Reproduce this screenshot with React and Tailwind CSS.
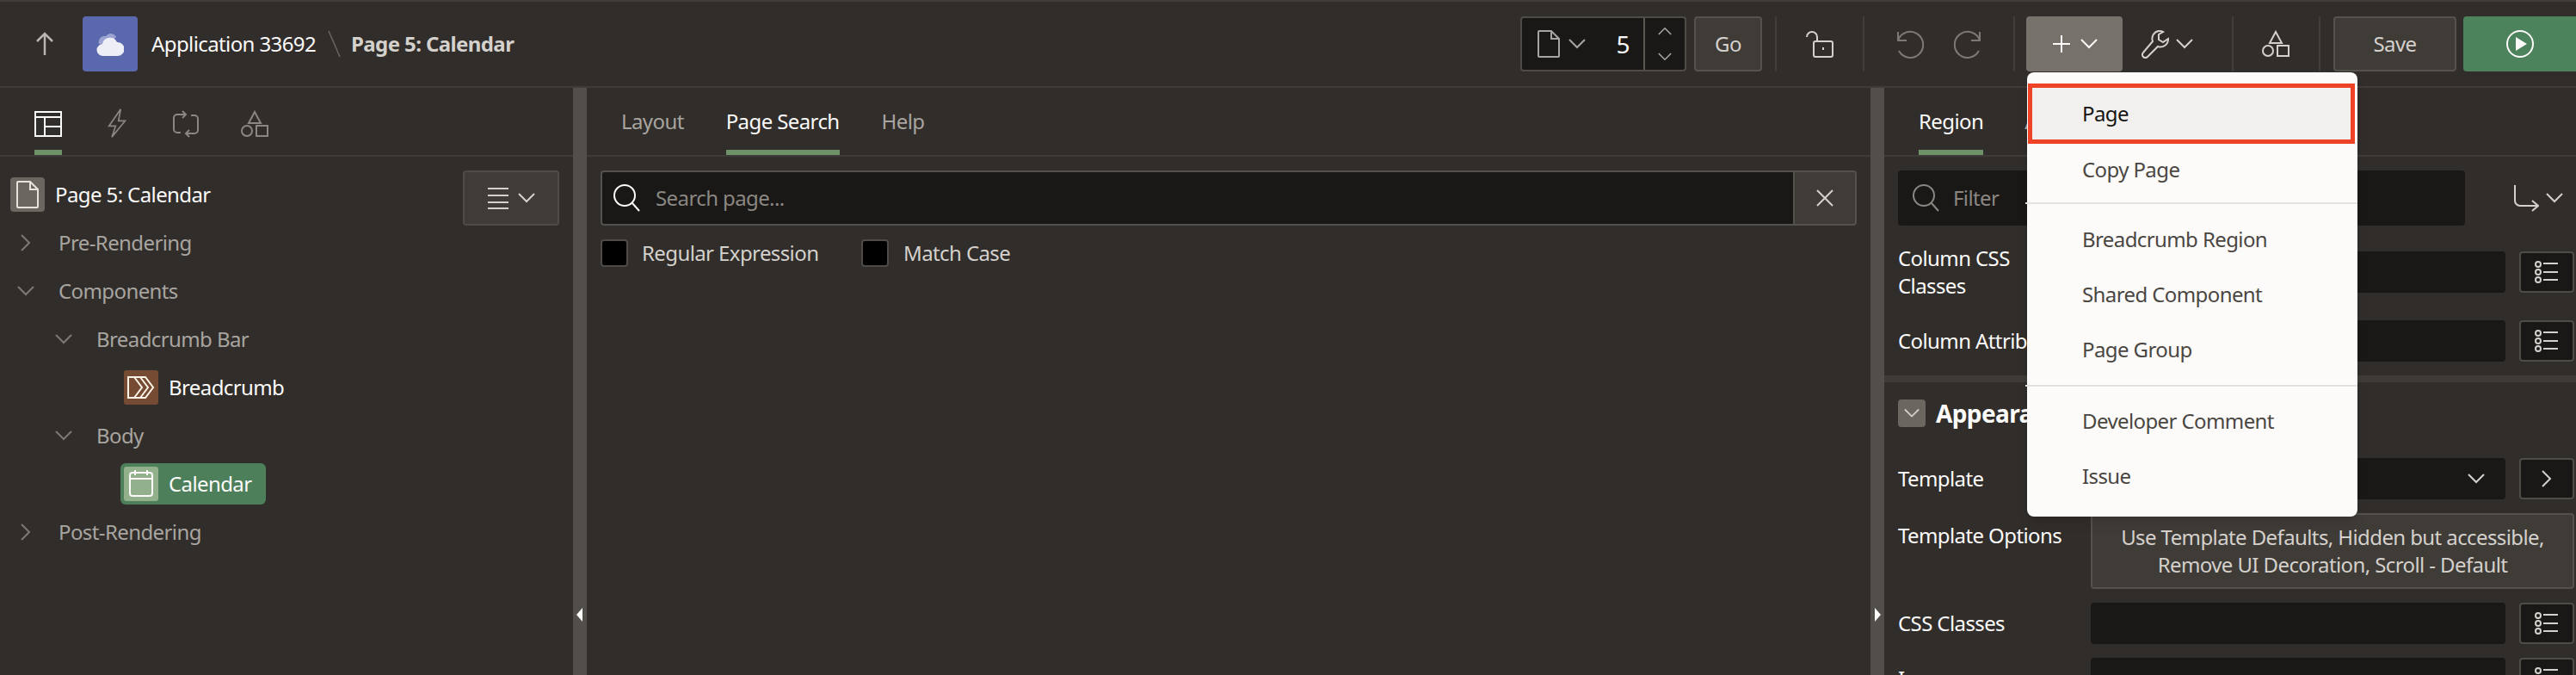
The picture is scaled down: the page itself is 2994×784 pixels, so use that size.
const Svg = ({ w = 32, h = 32, vb = '0 0 32 32', className = '', sw = 2, children }) => (
  <svg width={w} height={h} viewBox={vb} fill="none" stroke="currentColor" strokeWidth={sw} className={`shrink-0 ${className}`}>
    {children}
  </svg>
);

const ChevronDown = ({ className = '', w = 20 }) => (
  <Svg w={w} h={12} vb="0 0 20 12" className={className}><path d="M1 1l9 9 9-9" /></Svg>
);
const ChevronRight = ({ className = '' }) => (
  <Svg w={12} h={20} vb="0 0 12 20" className={className}><path d="M1 1l9 9-9 9" /></Svg>
);
const PageGlyph = ({ className = '' }) => (
  <Svg w={26} h={32} vb="0 0 26 32" className={className}><path d="M2 1h14l9 9v20a1 1 0 0 1-1 1H2a1 1 0 0 1-1-1V2a1 1 0 0 1 1-1zM16 1v9h9" /></Svg>
);
const Shapes = ({ className = '' }) => (
  <Svg className={className}><path d="M16 2l7 13H9z" /><circle cx="7" cy="24" r="6" /><rect x="18" y="18" width="13" height="12" /></Svg>
);
const SearchGlyph = ({ className = '' }) => (
  <Svg className={className}><circle cx="14" cy="13" r="12" /><path d="M23 22l8 9" /></Svg>
);
const ListGlyph = () => (
  <Svg w={28} h={28} vb="0 0 28 28" className="text-[#d4d1cc]">
    <circle cx="4" cy="5" r="3" /><circle cx="4" cy="14" r="3" /><circle cx="4" cy="23" r="3" />
    <path d="M10 4h17M10 14h17M10 23h17" />
  </Svg>
);

const SideButton = ({ children }) => (
  <div className="flex h-[48px] w-[64px] shrink-0 items-center justify-center rounded-[4px] border-2 border-[#4f4b46] bg-[#1a1816]">{children}</div>
);
const Divider = () => <div className="h-[64px] w-[2px] shrink-0 bg-[#413d39]" />;

function Header() {
  return (
    <header className="flex h-[100px] shrink-0 items-center border-b-2 border-[#3f3b37]">
      <Svg w={20} h={28} vb="0 0 20 28" className="ml-[42px] text-[#b8b5b0]" sw={2.5}><path d="M10 27V2M1 11l9-9 9 9" /></Svg>
      <div className="ml-[34px] flex h-[64px] w-[64px] items-center justify-center rounded-[4px] bg-[#5a68ad]">
        <svg width="32" height="30" viewBox="0 0 32 30">
          <path d="M3 15a7 7 0 0 1 8-9 7 7 0 0 1 12 1l-8 8z" fill="#9aa3d1" />
          <path d="M8 29a7 7 0 0 1-1-14 9 9 0 0 1 17-2 8 8 0 0 1 1 16z" fill="#eeeef6" />
        </svg>
      </div>
      <span className="ml-[16px] w-[194px] whitespace-nowrap text-[#fcfbfa]">Application 33692</span>
      <Svg w={16} h={32} vb="0 0 16 32" className="ml-[11px] text-[#6b6660]" sw={1.5}><path d="M1 1l13 30" /></Svg>
      <span className="ml-[11px] whitespace-nowrap font-bold text-[#d4d1cc]">Page 5: Calendar</span>

      <div className="ml-auto flex items-center">
        <div className="flex h-[64px] w-[193px] items-stretch rounded-[4px] border-2 border-[#4f4b46] bg-[#1a1816]">
          <div className="flex flex-1 items-center border-r-2 border-[#5b5752] pl-[18px] pr-[16px] text-[#a8a5a0]">
            <PageGlyph />
            <ChevronDown className="ml-[10px]" />
            <span className="ml-auto text-[28px] text-[#fcfbfa]">5</span>
          </div>
          <div className="flex w-[46px] flex-col items-center justify-center gap-[18px] text-[#a8a5a0]">
            <ChevronDown w={16} className="rotate-180" />
            <ChevronDown w={16} />
          </div>
        </div>
        <div className="ml-[9px] flex h-[64px] w-[79px] items-center justify-center rounded-[4px] border-2 border-[#55514c] bg-[#3f3b37] text-[#d4d1cc]">Go</div>
        <div className="ml-[15px]"><Divider /></div>
        <Svg w={34} h={34} vb="0 0 34 34" className="ml-[33px] text-[#d4d1cc]">
          <path d="M2 9a6 6 0 0 1 12 0v5" /><rect x="10" y="14" width="22" height="18" rx="2" /><path d="M21 21v3" />
        </Svg>
        <div className="ml-[33px]"><Divider /></div>
        <Svg w={34} h={34} vb="0 0 34 34" className="ml-[35px] text-[#7d7974]">
          <path d="M4 3v10h10" /><path d="M4 13A15 15 0 1 1 5 25" />
        </Svg>
        <Svg w={34} h={34} vb="0 0 34 34" className="ml-[35px] text-[#7d7974]">
          <path d="M30 3v10H20" /><path d="M30 13A15 15 0 1 0 29 25" />
        </Svg>
        <div className="ml-[35px]"><Divider /></div>
        <div className="ml-[13px] flex h-[64px] w-[112px] items-center justify-center gap-[10px] rounded-[4px] bg-[#77716b] text-[#fcfbfa]">
          <Svg w={24} h={24} vb="0 0 24 24"><path d="M12 2v20M2 12h20" /></Svg>
          <ChevronDown />
        </div>
        <div className="ml-[22px] flex w-[60px] items-center gap-[8px] text-[#d4d1cc]">
          <Svg w={32} h={34} vb="0 0 32 34">
            <path d="M20 2a9 9 0 0 0-7 12L2 27a3.5 3.5 0 0 0 5 5l12-12a9 9 0 0 0 12-9l-6 4-5-3V6l5-3a9 9 0 0 0-5-1z" />
          </Svg>
          <ChevronDown />
        </div>
        <div className="ml-[45px]"><Divider /></div>
        <Shapes className="ml-[33px] text-[#d4d1cc]" />
        <div className="ml-[34px]"><Divider /></div>
        <div className="ml-[15px] flex h-[64px] w-[143px] items-center justify-center rounded-[4px] border-2 border-[#55514c] bg-[#3f3b37] text-[#d4d1cc]">Save</div>
        <div className="ml-[8px] flex h-[64px] w-[131px] items-center justify-center rounded-l-[4px] bg-[#4c825c] text-[#fcfbfa]">
          <svg width="32" height="32" viewBox="0 0 32 32" fill="none" stroke="currentColor" strokeWidth="2">
            <circle cx="16" cy="16" r="15" /><path d="M11 8l13 8-13 8z" fill="currentColor" stroke="none" />
          </svg>
        </div>
      </div>
    </header>
  );
}

const TreeLabel = ({ indent, open, label }) => (
  <div className="flex h-[56px] items-center text-[#a8a5a0]" style={{ paddingLeft: indent }}>
    <span className="flex w-[44px] shrink-0 justify-center pr-[32px] text-[#7d7974]">
      {open ? <ChevronDown /> : <ChevronRight />}
    </span>
    {label}
  </div>
);

function LeftPanel() {
  return (
    <aside className="w-[666px] shrink-0">
      <div className="flex h-[80px] items-start border-b-2 border-[#3f3b37] pl-[40px]">
        <div className="flex h-[78px] w-[32px] flex-col items-center justify-between pt-[26px]">
          <Svg className="text-[#fcfbfa]"><path d="M1 2h30v28H1zM1 8h30M12 8v22M12 19h19" /></Svg>
          <div className="h-[6px] w-[32px] bg-[#6e9168]" />
        </div>
        <Svg className="ml-[48px] mt-[24px] text-[#8a8783]" h={34} vb="0 0 32 40"><path d="M21 1L5 24h9l-5 15 18-22h-9z" /></Svg>
        <Svg className="ml-[48px] mt-[26px] text-[#8a8783]"><path d="M16 5H6a4 4 0 0 0-4 4v13a4 4 0 0 0 4 4h4M16 27h10a4 4 0 0 0 4-4V10a4 4 0 0 0-4-4h-4M12 1l4 4-4 4M20 23l-4 4 4 4" /></Svg>
        <Shapes className="ml-[48px] mt-[26px] text-[#8a8783]" />
      </div>
      <div className="pt-[16px]">
        <div className="flex items-start pl-[12px] pr-[16px]">
          <div className="flex h-[56px] items-center text-[#fcfbfa]">
            <div className="flex h-[40px] w-[40px] items-center justify-center rounded-[4px] bg-[#6b6660] text-[#e6e3df]"><PageGlyph /></div>
            <span className="ml-[12px]">Page 5: Calendar</span>
          </div>
          <div className="-mb-[8px] ml-auto flex h-[64px] w-[112px] items-center justify-center gap-[10px] rounded-[4px] border-2 border-[#4f4b46] bg-[#3f3b37] text-[#d4d1cc]">
            <Svg w={26} h={26} vb="0 0 26 26"><path d="M1 2h24M1 10h24M1 18h24M1 25h24" /></Svg>
            <ChevronDown />
          </div>
        </div>
        <TreeLabel indent={24} label="Pre-Rendering" />
        <TreeLabel indent={24} open label="Components" />
        <TreeLabel indent={68} open label="Breadcrumb Bar" />
        <div className="flex h-[56px] items-center pl-[144px] text-[#fcfbfa]">
          <div className="flex h-[40px] w-[40px] items-center justify-center rounded-[3px] bg-[#754c33]">
            <Svg w={32} h={26} vb="0 0 32 26" className="text-[#fcf3e8]"><path d="M1 1h20l9 12-9 12H1zM8 1l9 12-9 12M15 1l9 12-9 12" /></Svg>
          </div>
          <span className="ml-[12px]">Breadcrumb</span>
        </div>
        <TreeLabel indent={68} open label="Body" />
        <div className="flex h-[56px] items-center pl-[140px] text-[#fcfbfa]">
          <div className="flex h-[48px] w-[169px] items-center rounded-[6px] bg-[#4d7f5a] pl-[4px]">
            <div className="flex h-[40px] w-[40px] items-center justify-center rounded-[3px] bg-[#93b08d]">
              <Svg w={30} h={32} vb="0 0 30 32"><rect x="2" y="3" width="26" height="27" rx="3" /><path d="M2 10h26M8 0v6M22 0v6" /></Svg>
            </div>
            <span className="ml-[12px]">Calendar</span>
          </div>
        </div>
        <TreeLabel indent={24} label="Post-Rendering" />
      </div>
    </aside>
  );
}

const Splitter = ({ dir }) => (
  <div className="relative w-[16px] shrink-0 bg-[#524e49]">
    <div className={`absolute top-[604px] h-0 w-0 border-y-[8px] border-y-transparent ${dir === 'left' ? 'left-[4px] border-r-[7px] border-r-[#fcfbfa]' : 'left-[5px] border-l-[7px] border-l-[#fcfbfa]'}`} />
  </div>
);

function CenterPanel() {
  return (
    <main className="min-w-0 flex-1">
      <div className="flex h-[80px] items-start gap-[49px] border-b-2 border-[#3f3b37] pl-[40px] text-[#a8a5a0]">
        <span className="pt-[21px]">Layout</span>
        <div className="flex h-[78px] flex-col justify-between pt-[21px] text-[#fcfbfa]">
          <span>Page Search</span>
          <div className="h-[6px] bg-[#6e9168]" />
        </div>
        <span className="pt-[21px]">Help</span>
      </div>
      <div className="px-[16px] pt-[16px]">
        <div className="flex h-[64px]">
          <div className="flex flex-1 items-center rounded-l-[4px] border-2 border-[#55514c] bg-[#1a1816] pl-[12px] text-[#8a8783]">
            <SearchGlyph className="text-[#fcfbfa]" />
            <span className="ml-[18px]">Search page...</span>
          </div>
          <div className="flex w-[72px] items-center justify-center rounded-r-[4px] border-y-2 border-r-2 border-[#55514c] bg-[#3f3b37] text-[#d4d1cc]">
            <Svg w={22} h={22} vb="0 0 22 22"><path d="M2 2l18 18M20 2L2 20" /></Svg>
          </div>
        </div>
        <div className="mt-[16px] flex h-[32px] items-center text-[#d4d1cc]">
          <div className="h-[32px] w-[32px] rounded-[4px] border-2 border-[#4f4b46] bg-black" />
          <span className="ml-[16px] w-[255px]">Regular Expression</span>
          <div className="h-[32px] w-[32px] rounded-[4px] border-2 border-[#4f4b46] bg-black" />
          <span className="ml-[17px]">Match Case</span>
        </div>
      </div>
    </main>
  );
}

const PropRow = ({ label, labelClass = '', children, button = <ListGlyph /> }) => (
  <div className="flex items-center pt-[16px]">
    <div className={`w-[224px] shrink-0 leading-[32px] text-[#fcfbfa] ${labelClass}`}>{label}</div>
    <div className="flex h-[48px] w-[482px] shrink-0 items-center justify-end rounded-[4px] bg-[#1a1816] pr-[24px] text-[#d4d1cc]">{children}</div>
    <div className="ml-[16px]"><SideButton>{button}</SideButton></div>
  </div>
);

function RightPanel() {
  return (
    <aside className="w-[804px] shrink-0 overflow-hidden">
      <div className="flex h-[80px] items-start gap-[48px] border-b-2 border-[#3f3b37] pl-[40px] text-[#a8a5a0]">
        <div className="flex h-[78px] flex-col justify-between pt-[21px] text-[#fcfbfa]">
          <span>Region</span>
          <div className="h-[6px] bg-[#6e9168]" />
        </div>
        <span className="pt-[21px]">Attributes</span>
      </div>
      <div className="flex items-center pl-[16px] pt-[16px]">
        <div className="flex h-[64px] w-[659px] items-center rounded-[4px] bg-[#1a1816] pl-[16px] text-[#8a8783]">
          <SearchGlyph />
          <span className="ml-[16px]">Filter</span>
        </div>
        <Svg w={30} h={32} vb="0 0 30 32" className="ml-[56px] text-[#d4d1cc]"><path d="M2 1v18a6 6 0 0 0 6 6h20M22 19l7 6-7 6" /></Svg>
        <ChevronDown className="ml-[8px] text-[#d4d1cc]" />
      </div>
      <div className="pl-[16px] pt-[14px]">
        <PropRow label={<>Column CSS<br />Classes</>} labelClass="-my-[8px]" />
        <div className="pt-[16px]"><PropRow label="Column Attributes" labelClass="whitespace-nowrap" /></div>
      </div>
      <div className="mt-[16px] h-[8px] bg-[#3f3b37]" />
      <div className="pl-[16px] pt-[20px]">
        <div className="flex h-[32px] items-center">
          <div className="flex h-[32px] w-[32px] items-center justify-center rounded-[4px] bg-[#6b6660] text-[#d4d1cc]"><ChevronDown w={18} /></div>
          <span className="ml-[12px] text-[28px] font-bold text-[#fcfbfa]">Appearance</span>
        </div>
        <div className="pt-[20px]">
          <PropRow label="Template" button={<ChevronRight className="text-[#d4d1cc]" />}><ChevronDown /></PropRow>
          <div className="mt-[16px] flex items-start">
            <div className="w-[224px] shrink-0 pt-[8px] text-[#fcfbfa]">Template Options</div>
            <div className="flex h-[88px] w-[562px] shrink-0 items-center justify-center rounded-[4px] border-2 border-[#55514c] bg-[#3f3b37] text-center leading-[32px] text-[#d4d1cc]">
              <span className="whitespace-nowrap">Use Template Defaults, Hidden but accessible,<br />Remove UI Decoration, Scroll - Default</span>
            </div>
          </div>
          <PropRow label="CSS Classes" />
          <PropRow label="Icon" />
        </div>
      </div>
    </aside>
  );
}

const MenuItem = ({ children, active }) => (
  <div className={`flex items-center ${active ? 'h-[70px] border-[5px] border-[#ee4326] bg-[#f1f0ee] pl-[58px] text-[#161513]' : 'h-[64px] pl-[63px] text-[#4a4642]'}`}>{children}</div>
);

function AddMenu() {
  return (
    <div className="absolute left-[2356px] top-[82px] h-[516px] w-[384px] rounded-[8px] bg-[#fcfbfa] pt-[13px] shadow-lg">
      <div className="pl-[1px] pr-[3px]">
        <MenuItem active>Page</MenuItem>
        <div className="-mt-[2px]"><MenuItem>Copy Page</MenuItem></div>
        <div className="-mx-[3px] mb-[9px] mt-[6px] h-[2px] bg-[#e4e2de]" />
        <MenuItem>Breadcrumb Region</MenuItem>
        <MenuItem>Shared Component</MenuItem>
        <MenuItem>Page Group</MenuItem>
        <div className="-mx-[3px] mb-[8px] mt-[9px] h-[2px] bg-[#e4e2de]" />
        <MenuItem>Developer Comment</MenuItem>
        <MenuItem>Issue</MenuItem>
      </div>
    </div>
  );
}

export default function App() {
  return (
    <div className="relative flex h-[784px] w-[2994px] flex-col overflow-hidden border-t-2 border-[#403c38] bg-[#312d2a] font-['Noto_Sans',sans-serif] text-[24px] tracking-[-0.6px]">
      <Header />
      <div className="flex min-h-0 flex-1">
        <LeftPanel />
        <Splitter dir="left" />
        <CenterPanel />
        <Splitter dir="right" />
        <RightPanel />
      </div>
      <AddMenu />
    </div>
  );
}
